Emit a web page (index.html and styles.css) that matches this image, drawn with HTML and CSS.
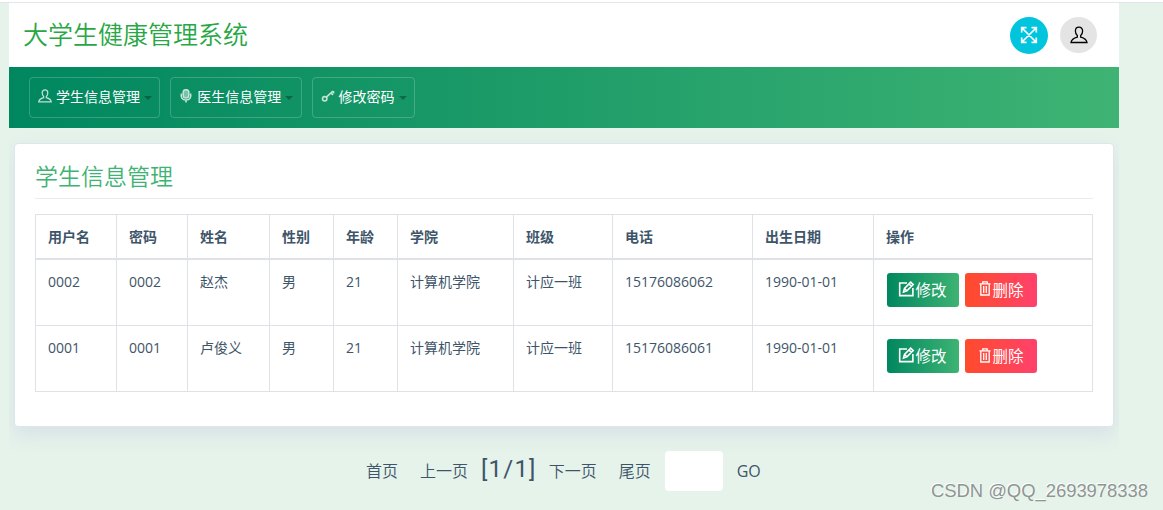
FILE: index.html
```html
<!DOCTYPE html>
<html lang="zh-CN">

<head>
    <meta charset="UTF-8">
    <meta name="viewport" content="width=device-width, initial-scale=1.0">
    <title>大学生健康管理系统</title>
    <link rel="stylesheet" href="styles.css">
</head>

<body>
    <svg class="symbols" width="0" height="0">
        <symbol id="icon-user" viewBox="0 0 18 18">
            <path d="M9 1.200c-2.200 0-3.600 1.400-3.600 3.800 0 2 .7 3.600 1.900 4.600v1.600c-2.600.7-5.800 1.800-6.300 5.300h16c-.5-3.500-3.700-4.600-6.300-5.300V9.600c1.200-1 1.900-2.600 1.900-4.600C12.600 2.600 11.200 1.200 9 1.200z" />
        </symbol>
        <symbol id="icon-mic" viewBox="0 0 14 14">
            <rect x="4.200" y=".7" width="5.600" height="8.300" rx="2.800" fill="currentColor" fill-opacity=".6" />
            <path d="M2.500 4.500C1.500 8 3 11 7 11s5.500-3 4.500-6.500M7 11v2.600" />
        </symbol>
        <symbol id="icon-key" viewBox="0 0 14 14">
            <circle cx="3.700" cy="9.800" r="2.200" />
            <path d="M5.400 8.200L12 2M10 4l2 2M12.500 2v2.500" />
        </symbol>
        <symbol id="icon-full" viewBox="0 0 18 18">
            <path d="M2 2l14 14M16 2L2 16M1.700 6.500V1.700h4.800M11.500 1.700h4.800v4.800M16.300 11.500v4.800h-4.800M6.500 16.300H1.700v-4.800" />
        </symbol>
        <symbol id="icon-edit" viewBox="0 0 17 16">
            <path d="M9 2H1.700v12.600h13.200V7" />
            <path d="M5.500 11l1-3.600 6.200-6.200 2.500 2.400-6.300 6.300zM11 3l2.400 2.400M6.500 7.600l2.300 2.300" />
        </symbol>
        <symbol id="icon-trash" viewBox="0 0 12 15">
            <path d="M.5 2.800h11M3.800 2.500V.8h4.400v1.700M1.800 3v11h8.400V3M4.700 5v7M7.300 5v7" />
        </symbol>
    </svg>

    <div class="wrapper">
        <header class="topbar">
            <h1>大学生健康管理系统</h1>
            <div class="tools">
                <a class="round full"><svg><use href="#icon-full" /></svg></a>
                <a class="round user"><svg><use href="#icon-user" /></svg></a>
            </div>
        </header>

        <nav class="menu">
            <a class="menu-item"><svg><use href="#icon-user" /></svg>学生信息管理<i class="caret"></i></a>
            <a class="menu-item"><svg><use href="#icon-mic" /></svg>医生信息管理<i class="caret"></i></a>
            <a class="menu-item"><svg><use href="#icon-key" /></svg>修改密码<i class="caret"></i></a>
        </nav>

        <main class="card">
            <h2>学生信息管理</h2>
            <table>
                <colgroup>
                    <col class="c-id">
                    <col class="c-pwd">
                    <col class="c-name">
                    <col class="c-sex">
                    <col class="c-age">
                    <col class="c-college">
                    <col class="c-class">
                    <col class="c-tel">
                    <col class="c-birth">
                    <col class="c-ops">
                </colgroup>
                <thead>
                    <tr>
                        <th>用户名</th>
                        <th>密码</th>
                        <th>姓名</th>
                        <th>性别</th>
                        <th>年龄</th>
                        <th>学院</th>
                        <th>班级</th>
                        <th>电话</th>
                        <th>出生日期</th>
                        <th>操作</th>
                    </tr>
                </thead>
                <tbody>
                    <tr>
                        <td>0002</td>
                        <td>0002</td>
                        <td>赵杰</td>
                        <td>男</td>
                        <td>21</td>
                        <td>计算机学院</td>
                        <td>计应一班</td>
                        <td>15176086062</td>
                        <td>1990-01-01</td>
                        <td>
                            <div class="ops">
                                <button class="btn edit"><svg><use href="#icon-edit" /></svg><span>修改</span></button>
                                <button class="btn delete"><svg><use href="#icon-trash" /></svg><span>删除</span></button>
                            </div>
                        </td>
                    </tr>
                    <tr>
                        <td>0001</td>
                        <td>0001</td>
                        <td>卢俊义</td>
                        <td>男</td>
                        <td>21</td>
                        <td>计算机学院</td>
                        <td>计应一班</td>
                        <td>15176086061</td>
                        <td>1990-01-01</td>
                        <td>
                            <div class="ops">
                                <button class="btn edit"><svg><use href="#icon-edit" /></svg><span>修改</span></button>
                                <button class="btn delete"><svg><use href="#icon-trash" /></svg><span>删除</span></button>
                            </div>
                        </td>
                    </tr>
                </tbody>
            </table>
        </main>

        <div class="pager">
            <a class="first">首页</a>
            <a class="prev">上一页</a>
            <span class="current">[1/1]</span>
            <a class="next">下一页</a>
            <a class="last">尾页</a>
            <input type="text" aria-label="页码">
            <a class="go">GO</a>
        </div>
    </div>

    <div class="watermark">CSDN @QQ_2693978338</div>
</body>

</html>
```
FILE: styles.css
```css
* {
    box-sizing: border-box;
}

body {
    margin: 0;
    height: 510px;
    overflow: hidden;
    background: #e5f3eb;
    border-top: 2px solid #fff;
    color: #3e5569;
    font-family: "Open Sans", "Noto Sans CJK SC", sans-serif;
    font-size: 14px;
    font-weight: 400;
}

body::before {
    content: "";
    display: block;
    height: 1px;
    background: #e0e6ea;
}

.symbols {
    position: absolute;
}

svg {
    fill: none;
    stroke: currentColor;
}

.wrapper {
    width: 1110px;
    height: 507px;
    margin-left: 9px;
    overflow: hidden;
}

.topbar {
    display: flex;
    justify-content: space-between;
    align-items: center;
    height: 64px;
    padding: 0 22px 0 14px;
    background: #fff;
}

.topbar h1 {
    margin: 0;
    padding-bottom: 2px;
    color: #28a745;
    font-size: 25px;
    font-weight: 350;
    line-height: 30px;
}

.tools {
    display: flex;
    gap: 12px;
}

.round {
    display: flex;
    align-items: center;
    justify-content: center;
    border-radius: 50%;
}

.round svg {
    width: 18px;
    height: 18px;
}

.full {
    width: 38px;
    height: 37px;
    background: #00c5dc;
    color: #fff;
    stroke-width: 1.7;
}

.user {
    width: 37px;
    height: 36px;
    background: #e4e4e4;
    color: #000;
    stroke-width: 1.3;
}

.menu {
    display: flex;
    align-items: flex-start;
    gap: 10px;
    height: 61px;
    padding: 10px 20px;
    background: linear-gradient(to right, #00875f, #3eb373);
}

.menu-item {
    display: flex;
    align-items: center;
    height: 41px;
    padding: 0 7.3px 3px 8px;
    border: 1px solid rgba(255, 255, 255, 0.2);
    border-radius: 4px;
    color: #fff;
    white-space: nowrap;
}

.menu-item svg {
    width: 14px;
    height: 14px;
    margin-right: 4px;
    opacity: 0.75;
    stroke-width: 1.6;
}

.caret {
    margin: 3px 0 0 4px;
    border: 4px solid transparent;
    border-top-color: rgba(0, 0, 0, 0.3);
    border-bottom: 0;
}

.card {
    height: 284px;
    margin: 15px 5px 0;
    padding: 18px 20px 0;
    background: #fff;
    border: 1px solid #dde6e9;
    border-radius: 4px;
    box-shadow: 0 8px 18px rgba(200, 204, 226, 0.45);
}

.card h2 {
    height: 37px;
    margin: 0 0 15px;
    border-bottom: 1px solid #e9ecef;
    color: #3eb373;
    font-size: 23px;
    font-weight: 350;
    line-height: 28px;
}

table {
    width: 1058px;
    table-layout: fixed;
    border-collapse: collapse;
}

th,
td {
    border: 1px solid #dee2e6;
    padding: 11px 12px;
    text-align: left;
    vertical-align: top;
    line-height: 21px;
    white-space: nowrap;
}

th {
    height: 44px;
    padding-bottom: 10px;
    border-bottom-width: 2px;
    font-weight: 600;
}

td {
    height: 66px;
    font-weight: 370;
}

tbody tr:first-child td {
    height: 67px;
}

.c-id {
    width: 81px;
}

.c-pwd {
    width: 71px;
}

.c-name {
    width: 82px;
}

.c-sex,
.c-age {
    width: 64px;
}

.c-college {
    width: 116px;
}

.c-class {
    width: 99px;
}

.c-tel {
    width: 140px;
}

.c-birth {
    width: 121px;
}

.ops {
    display: flex;
    gap: 6px;
    padding: 2px 1px 0;
}

.btn {
    display: flex;
    align-items: center;
    justify-content: center;
    width: 72px;
    height: 34px;
    padding: 0;
    border: 0;
    border-radius: 3px;
    color: #fff;
    font-family: inherit;
    font-size: 15.5px;
}

.btn svg {
    margin-bottom: 2px;
}

.btn span {
    padding-bottom: 1px;
}

.edit {
    padding-right: 1px;
    background: linear-gradient(to right, #00875f, #3eb373);
}

.edit svg {
    width: 17px;
    height: 16px;
    stroke-width: 1.6;
}

.delete {
    padding-left: 1px;
    background: linear-gradient(to right, #ff4b2b, #ff416c);
}

.delete svg {
    width: 12px;
    height: 15px;
    margin-right: 1px;
    stroke-width: 1.3;
}

.pager {
    display: flex;
    align-items: center;
    height: 40px;
    margin: 24px 0 0 357px;
    font-size: 16px;
    font-weight: 350;
    white-space: nowrap;
}

.pager a {
    padding-bottom: 3px;
}

.prev {
    margin-left: 22px;
}

.current {
    margin: -5px 12px 0 13px;
    font-family: Roboto, "Open Sans", sans-serif;
    font-size: 24px;
    font-weight: 400;
    letter-spacing: 1.2px;
}

.last {
    margin-left: 22px;
}

.pager input {
    width: 58px;
    height: 40px;
    margin: 0 14px;
    background: #fff;
    border: 0;
    border-radius: 4px;
}

.pager .go {
    padding-bottom: 1px;
    font-weight: 370;
}

.watermark {
    position: absolute;
    right: 15px;
    bottom: 8px;
    color: #8f9592;
    font: 18.4px/22px "Liberation Sans", sans-serif;
    text-shadow: -1px -1px 0 #fff;
}
```
